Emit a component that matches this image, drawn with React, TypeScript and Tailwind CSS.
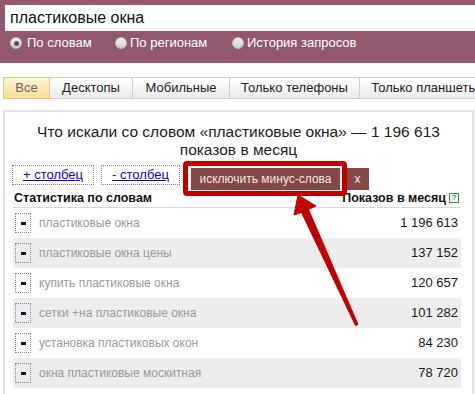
import React from 'react';

const rows = [
  { phrase: 'пластиковые окна', count: '1 196 613' },
  { phrase: 'пластиковые окна цены', count: '137 152' },
  { phrase: 'купить пластиковые окна', count: '120 657' },
  { phrase: 'сетки +на пластиковые окна', count: '101 282' },
  { phrase: 'установка пластиковых окон', count: '84 230' },
  { phrase: 'окна пластиковые москитная', count: '78 720' },
];

const tabs = [
  { label: 'Все', w: 'w-[47px]', active: true },
  { label: 'Десктопы', w: 'w-[83px]' },
  { label: 'Мобильные', w: 'w-[97px]' },
  { label: 'Только телефоны', w: 'w-[130px]' },
  { label: 'Только планшеты', w: 'w-[130px]' },
];

function Radio({ checked }: { checked?: boolean }) {
  return (
    <span className="w-[12px] h-[12px] rounded-full bg-gradient-to-b from-[#f2f2f2] to-[#cfcfcf] border border-[#bdbdbd] flex items-center justify-center shrink-0">
      {checked && <span className="w-[5px] h-[5px] rounded-full bg-[#555]" />}
    </span>
  );
}

export default function App() {
  return (
    <div className="relative w-[475px] h-[394px] overflow-hidden bg-white font-['Liberation_Sans',Arial,sans-serif]">
      {/* search header */}
      <div className="h-[63px] bg-[#93586f] pt-[5px] pl-[5px]">
        <div className="h-[26px] bg-white flex items-center pl-[5px] text-[16px] text-[#111]">
          пластиковые окна
        </div>
        <div className="flex items-center h-[14px] mt-[5px] pl-[5px] text-[13px] text-white">
          <label className="flex items-center gap-[5px] w-[105px]">
            <Radio checked />
            По словам
          </label>
          <label className="flex items-center gap-[3px] w-[117px]">
            <Radio />
            По регионам
          </label>
          <label className="flex items-center gap-[3px]">
            <Radio />
            История запросов
          </label>
        </div>
      </div>

      {/* device tabs */}
      <div className="flex ml-[3px] mt-[14px] h-[22px] whitespace-nowrap">
        {tabs.map((t) => (
          <div
            key={t.label}
            className={
              t.active
                ? `${t.w} shrink-0 flex items-center justify-center text-[13px] text-[#666] border border-[#e3c98a] bg-gradient-to-b from-[#fff6d6] to-[#f8dc92]`
                : `${t.w} shrink-0 flex items-center justify-center text-[13px] text-[#222] border border-l-0 border-[#cfcfcf] bg-gradient-to-b from-white to-[#ececec]`
            }
          >
            {t.label}
          </div>
        ))}
      </div>

      {/* results panel */}
      <div className="ml-[3px] mr-[1px] mt-[11px] border-2 border-b-0 border-[#e4e4e4] h-[300px] pt-[11px]">
        <div className="text-center text-[15.5px] leading-[18px] text-[#222] px-[24px]">
          Что искали со словом «пластиковые окна» — 1 196 613 показов в месяц
        </div>

        <div className="flex items-start mt-[6px] ml-[7px] h-[24px]">
          <span className="w-[82px] h-[20px] border border-dotted border-[#888] flex items-center justify-center text-[13px] text-[#2200cc] underline">
            + столбец
          </span>
          <span className="w-[79px] h-[20px] ml-[7px] border border-dotted border-[#888] flex items-center justify-center text-[13px] text-[#2200cc] underline">
            - столбец
          </span>
          <div className="relative ml-[10px] mt-[3px]">
            <div className="w-[151px] h-[22px] bg-[#844848] border-x border-[#f0e8e8] flex items-center justify-center text-[12px] text-[#f5e6d6]">
              исключить минус-слова
            </div>
            <div className="absolute -left-[7px] -top-[7px] -right-[6px] -bottom-[6px] border-[5px] border-[#bf0000] rounded-[4px]" />
          </div>
          <div className="w-[23px] h-[22px] ml-[5px] mt-[3px] bg-[#844848] flex items-center justify-center text-[12px] text-[#f5e6d6]">
            x
          </div>
        </div>

        <div className="ml-[8px] mr-[11px]">
          <div className="flex items-center justify-between h-[19px] border-b border-[#d6d6e4] text-[12.5px] font-bold text-[#111] pl-[1px] pr-[2px]">
            <span>Статистика по словам</span>
            <span className="flex items-center gap-[3px]">
              Показов в месяц
              <span className="w-[10px] h-[10px] border border-[#3c9c3c] text-[#3c9c3c] text-[8px] leading-none flex items-center justify-center font-bold">
                ?
              </span>
            </span>
          </div>
          {rows.map((r, i) => (
            <div
              key={r.phrase}
              className={`flex items-center h-[30px] pl-[2px] pr-[3px] ${i % 2 === 1 ? 'bg-[#ededed]' : 'bg-white'}`}
            >
              <span className="w-[16px] h-[20px] border border-dotted border-[#888] flex items-center justify-center shrink-0">
                <span className="w-[5px] h-[3px] bg-[#1a1030]" />
              </span>
              <span className="ml-[8px] text-[12px] text-[#9a9a9a]">{r.phrase}</span>
              <span className="ml-auto text-[13px] text-[#1a1a1a]">{r.count}</span>
            </div>
          ))}
        </div>
      </div>

      {/* annotation arrow */}
      <svg className="absolute inset-0 pointer-events-none" width="475" height="394" viewBox="0 0 475 394">
        <polygon
          points="298,195 316,206 308.5,209.5 358,324.5 355.5,325.5 301.5,212.5 294,215"
          fill="#c00000"
          stroke="#c00000"
          strokeWidth="1"
          strokeLinejoin="round"
        />
      </svg>
    </div>
  );
}
